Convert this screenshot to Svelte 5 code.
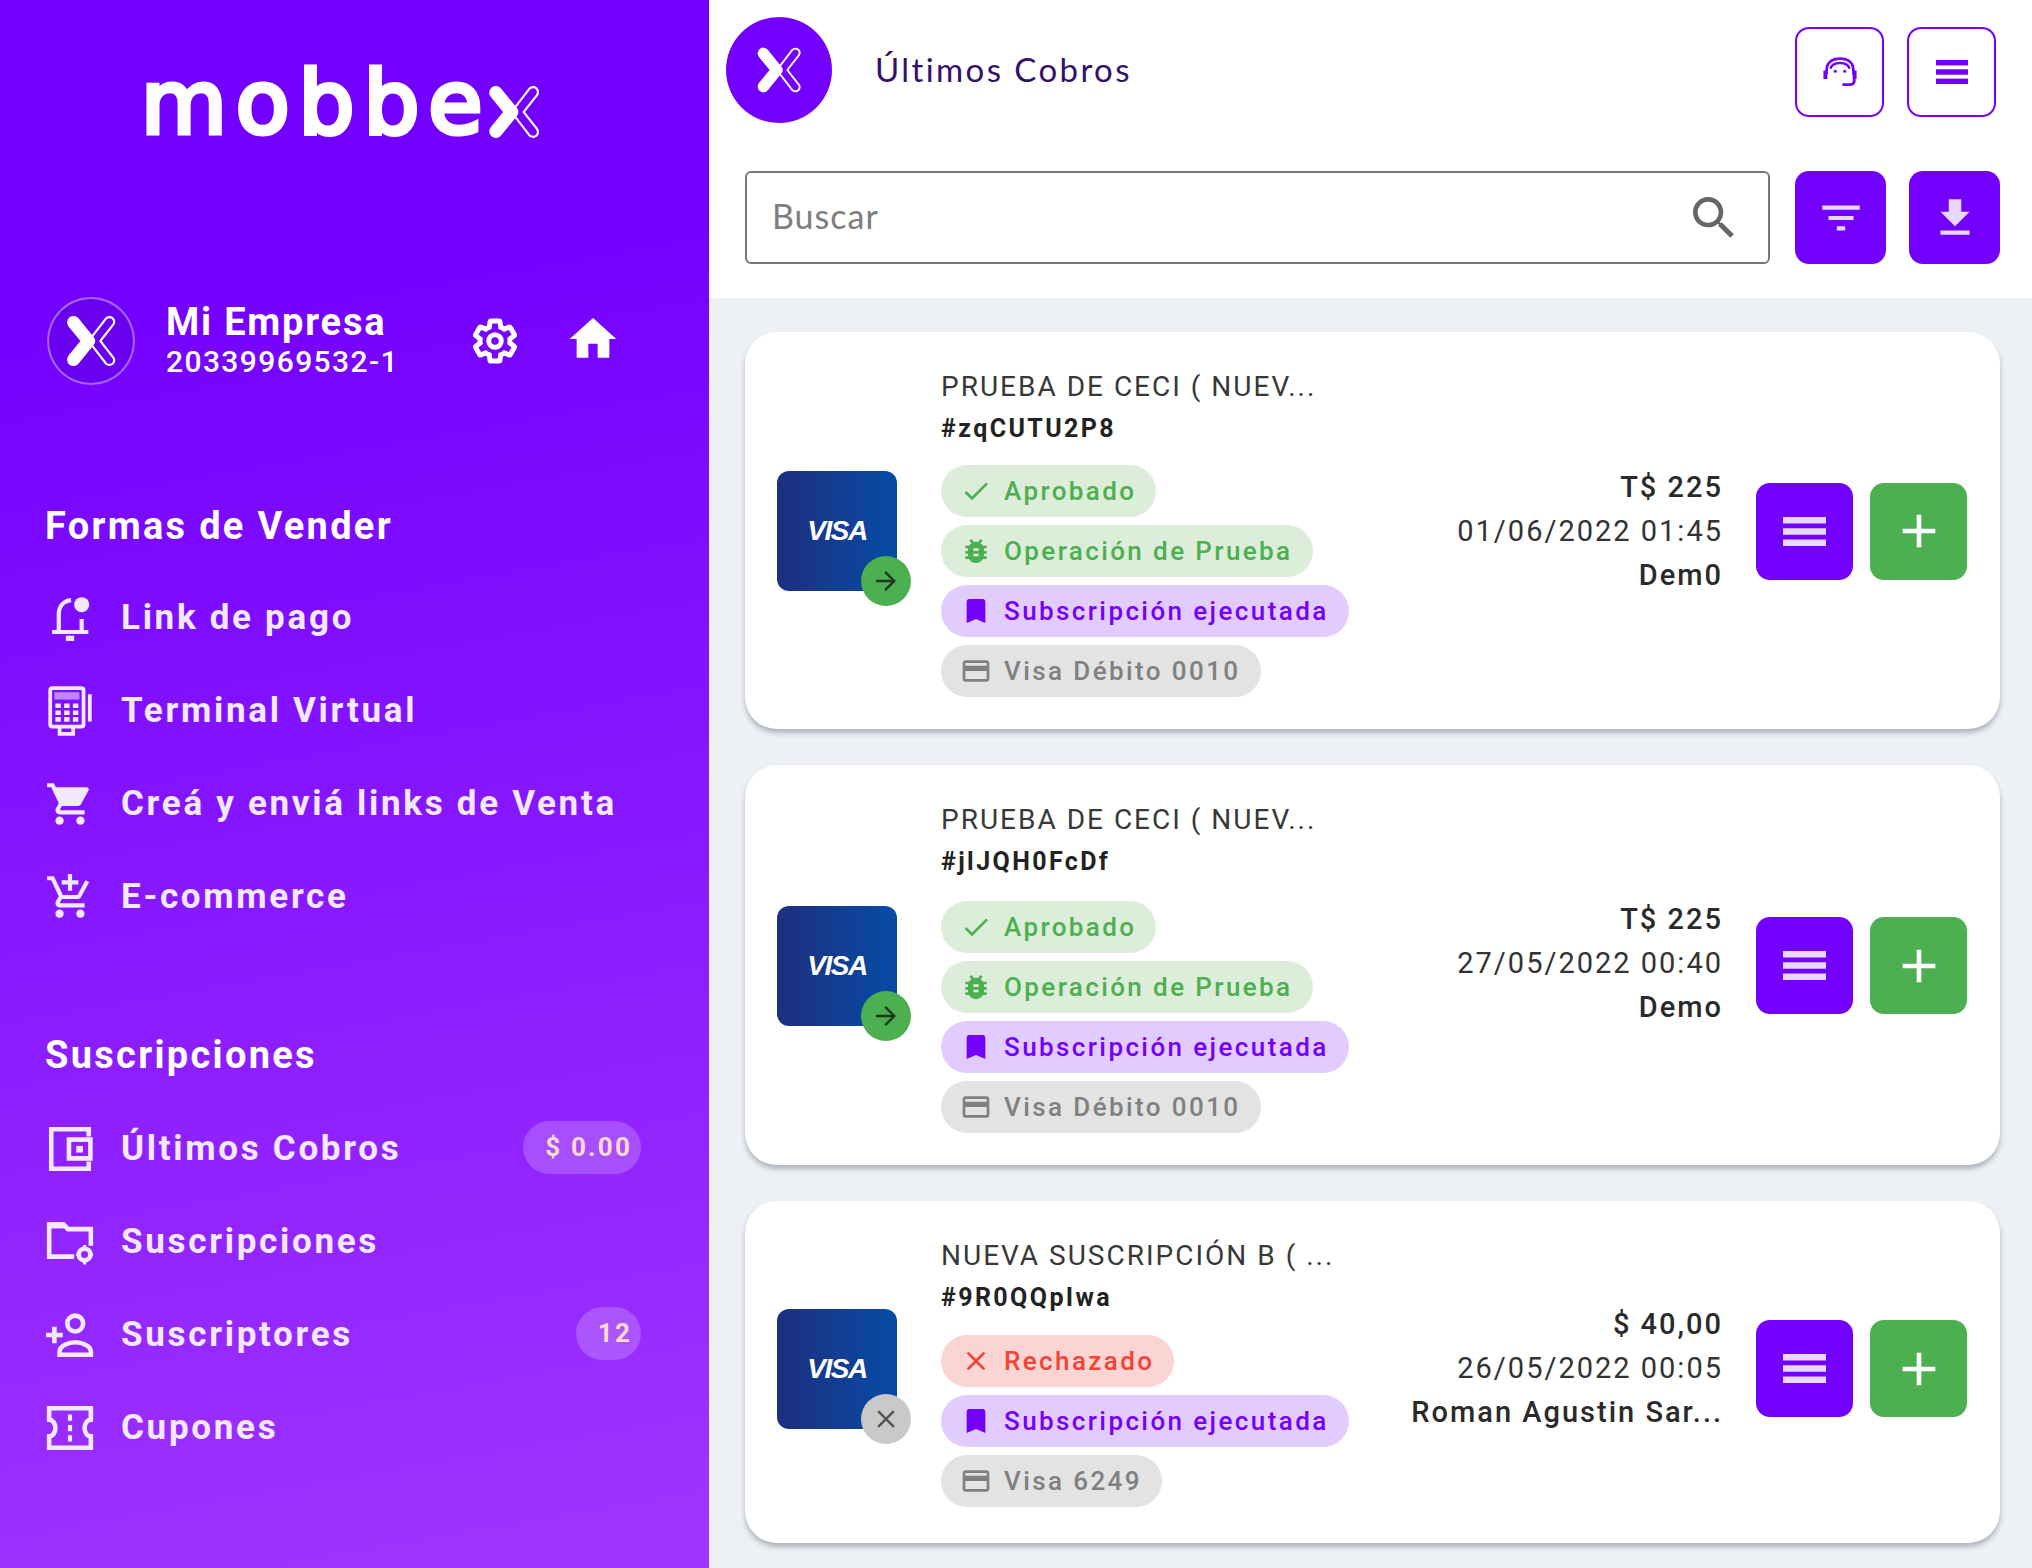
<script lang="ts">
  const icons: Record<string, string> = {
    home: 'M10 20v-6h4v6h5v-8h3L12 3 2 12h3v8z',
    cart: 'M7 18c-1.1 0-1.99.9-1.99 2S5.9 22 7 22s2-.9 2-2-.9-2-2-2zM1 2v2h2l3.6 7.59-1.35 2.45c-.16.28-.25.61-.25.96 0 1.1.9 2 2 2h12v-2H7.42c-.14 0-.25-.11-.25-.25l.03-.12.9-1.63h7.45c.75 0 1.41-.41 1.75-1.03l3.58-6.49c.08-.14.12-.31.12-.48 0-.55-.45-1-1-1H5.21l-.94-2H1zm16 16c-1.1 0-1.99.9-1.99 2s.89 2 1.99 2 2-.9 2-2-.9-2-2-2z',
    addCart: 'M11 9h2V6h3V4h-3V1h-2v3H8v2h3v3zm-4 9c-1.1 0-1.99.9-1.99 2S5.9 22 7 22s2-.9 2-2-.9-2-2-2zm10 0c-1.1 0-1.99.9-1.99 2s.89 2 1.99 2 2-.9 2-2-.9-2-2-2zm-9.83-3.25l.03-.12.9-1.63h7.45c.75 0 1.41-.41 1.75-1.03l3.86-7.01L19.42 4h-.01l-1.1 2-2.76 5H8.53l-.13-.27L6.16 6l-.95-2-.94-2H1v2h2l3.6 7.59-1.35 2.45c-.16.28-.25.61-.25.96 0 1.1.9 2 2 2h12v-2H7.42c-.13 0-.25-.11-.25-.25z',
    filter: 'M10 18h4v-2h-4v2zM3 6v2h18V6H3zm3 7h12v-2H6v2z',
    download: 'M19 9h-4V3H9v6H5l7 7 7-7zM5 18v2h14v-2H5z',
    search: 'M15.5 14h-.79l-.28-.27C15.41 12.59 16 11.11 16 9.5 16 5.91 13.09 3 9.5 3S3 5.91 3 9.5 5.91 16 9.5 16c1.61 0 3.09-.59 4.23-1.57l.27.28v.79l5 4.99L20.49 19l-4.99-5zm-6 0C7.01 14 5 11.99 5 9.5S7.01 5 9.5 5 14 7.01 14 9.5 11.99 14 9.5 14z',
    check: 'M9 16.17L4.83 12l-1.42 1.41L9 19 21 7l-1.41-1.41z',
    bug: 'M20 8h-2.81c-.45-.78-1.07-1.45-1.82-1.96L17 4.41 15.59 3l-2.17 2.17C12.96 5.06 12.49 5 12 5c-.49 0-.96.06-1.41.17L8.41 3 7 4.41l1.62 1.63C7.88 6.55 7.26 7.22 6.81 8H4v2h2.09c-.05.33-.09.66-.09 1v1H4v2h2v1c0 .34.04.67.09 1H4v2h2.81c1.04 1.79 2.97 3 5.19 3s4.15-1.21 5.19-3H20v-2h-2.09c.05-.33.09-.66.09-1v-1h2v-2h-2v-1c0-.34-.04-.67-.09-1H20V8zm-6 8h-4v-2h4v2zm0-4h-4v-2h4v2z',
    bookmark: 'M17 3H7c-1.1 0-2 .9-2 2v16l7-3 7 3V5c0-1.1-.9-2-2-2z',
    card: 'M20 4H4c-1.11 0-1.99.89-1.99 2L2 18c0 1.11.89 2 2 2h16c1.11 0 2-.89 2-2V6c0-1.11-.89-2-2-2zm0 14H4v-6h16v6zm0-10H4V6h16v2z',
    close: 'M19 6.41L17.59 5 12 10.59 6.41 5 5 6.41 10.59 12 5 17.59 6.41 19 12 13.41 17.59 19 19 17.59 13.41 12z',
    arrow: 'M12 4l-1.41 1.41L16.17 11H4v2h12.17l-5.58 5.59L12 20l8-8z',
    plus: 'M19 13h-6v6h-2v-6H5v-2h6V5h2v6h6v2z'
  };

  const sales = [
    { label: 'Link de pago', icon: 'bell' },
    { label: 'Terminal Virtual', icon: 'terminal' },
    { label: 'Creá y enviá links de Venta', icon: 'cart' },
    { label: 'E-commerce', icon: 'addCart' }
  ];

  const subs = [
    { label: 'Últimos Cobros', icon: 'wallet', pill: '$ 0.00' },
    { label: 'Suscripciones', icon: 'folder' },
    { label: 'Suscriptores', icon: 'person', pill: '12' },
    { label: 'Cupones', icon: 'ticket' }
  ];

  const payments = [
    {
      title: 'PRUEBA DE CECI ( NUEV...',
      id: '#zqCUTU2P8',
      amount: 'T$ 225',
      date: '01/06/2022 01:45',
      name: 'Dem0',
      ok: true,
      chips: [
        { text: 'Aprobado', icon: 'check', tone: 'green' },
        { text: 'Operación de Prueba', icon: 'bug', tone: 'green' },
        { text: 'Subscripción ejecutada', icon: 'bookmark', tone: 'purple' },
        { text: 'Visa Débito 0010', icon: 'card', tone: 'grey' }
      ]
    },
    {
      title: 'PRUEBA DE CECI ( NUEV...',
      id: '#jlJQH0FcDf',
      amount: 'T$ 225',
      date: '27/05/2022 00:40',
      name: 'Demo',
      ok: true,
      chips: [
        { text: 'Aprobado', icon: 'check', tone: 'green' },
        { text: 'Operación de Prueba', icon: 'bug', tone: 'green' },
        { text: 'Subscripción ejecutada', icon: 'bookmark', tone: 'purple' },
        { text: 'Visa Débito 0010', icon: 'card', tone: 'grey' }
      ]
    },
    {
      title: 'NUEVA SUSCRIPCIÓN B ( ...',
      id: '#9R0QQpIwa',
      amount: '$ 40,00',
      date: '26/05/2022 00:05',
      name: 'Roman Agustin Sar...',
      ok: false,
      chips: [
        { text: 'Rechazado', icon: 'close', tone: 'red' },
        { text: 'Subscripción ejecutada', icon: 'bookmark', tone: 'purple' },
        { text: 'Visa 6249', icon: 'card', tone: 'grey' }
      ]
    }
  ];
</script>

{#snippet icon(name: string, cls: string)}
  <svg class={cls} viewBox="0 0 24 24" fill="currentColor"><path d={icons[name]} /></svg>
{/snippet}

{#snippet xmark(cls: string)}
  <svg class={cls} viewBox="0 0 48 48" fill="none" stroke="currentColor" stroke-linecap="round" stroke-linejoin="round">
    <path d="M9 8 L22 24 L9 40" stroke-width="11" />
    <path d="M25 20 L37 4.5 Q40 2.5 42.5 4.5 Q45 7 43 10 L32 24 L43 38 Q45 41 42.5 43.5 Q40 45.5 37 43.5 L25 28" stroke-width="1.8" />
  </svg>
{/snippet}

{#snippet bars(cls: string)}
  <svg class={cls} viewBox="0 0 43 29" preserveAspectRatio="none" fill="currentColor">
    <rect width="43" height="6.5" />
    <rect y="11.25" width="43" height="6.5" />
    <rect y="22.5" width="43" height="6.5" />
  </svg>
{/snippet}

{#snippet navIcon(name: string)}
  {#if name === 'bell'}
    <svg class="nav-icon" viewBox="0 0 24 24" fill="none" stroke="currentColor" stroke-width="2">
      <path d="M12.5 3.4C8.6 3.8 6.6 6.8 6.6 10.5v7.2M17.6 12.5v5.2M3.4 18.7h17.4" />
      <path d="M10 20.5h4v2.5h-4z" fill="currentColor" stroke="none" />
      <circle cx="17.6" cy="5.6" r="3.6" fill="currentColor" stroke="none" />
    </svg>
  {:else if name === 'terminal'}
    <svg class="nav-icon" viewBox="0 0 24 24" fill="none" stroke="currentColor" stroke-width="1.8">
      <rect x="2.5" y="1" width="16" height="18.5" rx="1" />
      <path d="M7 19.5v3.5h6.5v-3.5M21.5 4v13" />
      <rect x="4.5" y="3" width="12" height="3.5" fill="currentColor" stroke="none" opacity=".55" />
      <path d="M5 9.5h2.6M9.2 9.5h2.6M13.4 9.5h2.6M5 12.8h2.6M9.2 12.8h2.6M13.4 12.8h2.6M5 16h2.6M9.2 16h2.6M13.4 16h2.6" stroke-width="2.2" />
    </svg>
  {:else if name === 'cart' || name === 'addCart'}
    {@render icon(name, 'nav-icon')}
  {:else if name === 'wallet'}
    <svg class="nav-icon" viewBox="0 0 24 24" fill="none" stroke="currentColor" stroke-width="2.2">
      <path d="M21 6V2.5H3v19h18V18" />
      <path d="M21.8 7.5H11.5v9h10.3z" />
      <rect x="15" y="10.5" width="3.2" height="3.2" fill="currentColor" stroke="none" />
    </svg>
  {:else if name === 'folder'}
    <svg class="nav-icon" viewBox="0 0 24 24" fill="none" stroke="currentColor" stroke-width="2.2">
      <path d="M14 19H2V3.6h7l2 2.2h11v8" />
      <path d="M2 2.5h7v3H2z" fill="currentColor" stroke="none" />
      <circle cx="19" cy="18" r="2.8" />
      <path d="M19 13.4v1.4M19 21.2v1.6M15 18h.8M22.2 18h.8" stroke-width="1.6" />
    </svg>
  {:else if name === 'person'}
    <svg class="nav-icon" viewBox="0 0 24 24" fill="none" stroke="currentColor" stroke-width="2.2">
      <circle cx="14.5" cy="6.5" r="3.8" />
      <path d="M7 21.5v-1.5c0-2.8 4.4-4.5 7.5-4.5s7.5 1.7 7.5 4.5v1.5z" />
      <path d="M0.5 12h8M4.5 8v8" />
    </svg>
  {:else}
    <svg class="nav-icon" viewBox="0 0 24 24" fill="none" stroke="currentColor" stroke-width="2.2">
      <path d="M22 8V2.5H2V8c1.7 0 3 1.8 3 4s-1.3 4-3 4v5.5h20V16c-1.7 0-3-1.8-3-4s1.3-4 3-4z" />
      <path d="M12 5.5v3M12 10.5v3M12 15.5v3" stroke-width="2" />
    </svg>
  {/if}
{/snippet}

<div class="page">
  <aside class="sidebar">
    <div class="logo">
      <span class="wordmark">mobbe</span>{@render xmark('logo-x')}
    </div>

    <div class="user">
      <div class="avatar">{@render xmark('avatar-x')}</div>
      <div class="user-info">
        <span class="company">Mi Empresa</span>
        <span class="tax-id">20339969532-1</span>
      </div>
      <svg class="gear" viewBox="0 0 24 24" fill="none" stroke="currentColor" stroke-width="2.4">
        <path d="M19.14 12.94c.04-.3.06-.61.06-.94 0-.32-.02-.64-.07-.94l2.03-1.58c.18-.14.23-.41.12-.61l-1.92-3.32c-.12-.22-.37-.29-.59-.22l-2.39.96c-.5-.38-1.03-.7-1.62-.94l-.36-2.54c-.04-.24-.24-.41-.48-.41h-3.84c-.24 0-.43.17-.47.41l-.36 2.54c-.59.24-1.13.57-1.62.94l-2.39-.96c-.22-.08-.47 0-.59.22L2.74 8.87c-.12.21-.08.47.12.61l2.03 1.58c-.05.3-.09.63-.09.94s.02.64.07.94l-2.03 1.58c-.18.14-.23.41-.12.61l1.92 3.32c.12.22.37.29.59.22l2.39-.96c.5.38 1.03.7 1.62.94l.36 2.54c.05.24.24.41.48.41h3.84c.24 0 .44-.17.47-.41l.36-2.54c.59-.24 1.13-.56 1.62-.94l2.39.96c.22.08.47 0 .59-.22l1.92-3.32c.12-.22.07-.47-.12-.61l-2.01-1.58z" />
        <circle cx="12" cy="12" r="3" />
      </svg>
      {@render icon('home', 'home')}
    </div>

    <h2 class="section first">Formas de Vender</h2>
    {#each sales as item}
      <div class="nav-item">
        {@render navIcon(item.icon)}
        <span class="nav-label">{item.label}</span>
      </div>
    {/each}

    <h2 class="section second">Suscripciones</h2>
    {#each subs as item}
      <div class="nav-item">
        {@render navIcon(item.icon)}
        <span class="nav-label">{item.label}</span>
        {#if item.pill}
          <span class="pill">{item.pill}</span>
        {/if}
      </div>
    {/each}
  </aside>

  <main class="main">
    <section class="top">
      <header class="header">
        <div class="brand-circle">{@render xmark('brand-x')}</div>
        <h1>Últimos Cobros</h1>
        <button class="outline">
          <svg class="headset" viewBox="0 0 24 19" fill="none" stroke="currentColor" stroke-width="1.7">
            <path d="M3.5 11V8.5C3.5 3.5 7 1 12 1s8.5 2.5 8.5 7.5V11" />
            <path d="M6 7.5C6.5 5 9 3.8 12 3.8s5.5 1.2 6 3.7" stroke-width="1.5" />
            <path d="M1.5 8.5h2.5v5.5H1.500zM20 8.500h2.500v5.500H20z" fill="currentColor" stroke="none" />
            <path d="M21 14v1c0 2-1 2.500-3 2.500h-4.500" stroke-width="1.8" />
            <circle cx="9" cy="9" r="1" fill="currentColor" stroke="none" />
            <circle cx="15" cy="9" r="1" fill="currentColor" stroke="none" />
          </svg>
        </button>
        <button class="outline second-btn">{@render bars('head-bars')}</button>
      </header>
      <div class="search-row">
        <div class="search">
          <span class="placeholder">Buscar</span>
          {@render icon('search', 'search-icon')}
        </div>
        <button class="solid filter">{@render icon('filter', 'solid-icon')}</button>
        <button class="solid dl">{@render icon('download', 'solid-icon')}</button>
      </div>
    </section>

    <section class="list">
      {#each payments as p}
        <article class="pay-card">
          <div class="visa">
            <span>VISA</span>
            <div class="badge" class:bad={!p.ok}>{@render icon(p.ok ? 'arrow' : 'close', 'badge-icon')}</div>
          </div>
          <div class="details">
            <div class="title">{p.title}</div>
            <div class="ref">{p.id}</div>
            <div class="chips">
              {#each p.chips as chip}
                <div class="chip {chip.tone}">
                  {@render icon(chip.icon, 'chip-icon')}
                  <span>{chip.text}</span>
                </div>
              {/each}
            </div>
          </div>
          <div class="amounts">
            <div class="amount">{p.amount}</div>
            <div class="date">{p.date}</div>
            <div class="name">{p.name}</div>
          </div>
          <button class="act purple">{@render bars('act-bars')}</button>
          <button class="act green-btn">{@render icon('plus', 'act-icon')}</button>
        </article>
      {/each}
    </section>
  </main>
</div>

<style>
  :global(body) {
    margin: 0;
    background: #edf1f5;
    font-family: Roboto, "Liberation Sans", sans-serif;
  }
  .page {
    display: flex;
    width: 2032px;
    height: 1568px;
    overflow: hidden;
  }

  /* sidebar */
  .sidebar {
    width: 709px;
    flex-shrink: 0;
    box-sizing: border-box;
    padding: 0 68px 0 47px;
    color: #fff;
    background: linear-gradient(170deg, #7300ff 18%, #a035ff 100%);
  }
  .logo {
    height: 206px;
    display: flex;
    align-items: center;
    padding-left: 94px;
  }
  .wordmark {
    font-family: "DejaVu Sans", sans-serif;
    font-size: 88px;
    line-height: 1;
    letter-spacing: 9px;
    -webkit-text-stroke: 5px #fff;
    margin-top: 0;
  }
  .logo :global(.logo-x) {
    width: 58px;
    height: 58px;
    margin: 18px 0 0 -6px;
  }
  .user {
    margin-top: 91px;
    height: 88px;
    display: flex;
    align-items: center;
  }
  .avatar {
    width: 88px;
    height: 88px;
    box-sizing: border-box;
    border-radius: 50%;
    border: 2px solid rgba(255, 255, 255, 0.4);
    background: #6a00f0;
    display: flex;
    align-items: center;
    justify-content: center;
    flex-shrink: 0;
  }
  .avatar :global(.avatar-x) {
    width: 56px;
    height: 56px;
  }
  .user-info {
    margin-left: 31px;
    display: flex;
    flex-direction: column;
    width: 306px;
  }
  .company {
    font-size: 38px;
    font-weight: 700;
    line-height: 42px;
    letter-spacing: 1.8px;
  }
  .tax-id {
    font-size: 30px;
    font-weight: 500;
    line-height: 38px;
    letter-spacing: 1.4px;
  }
  .gear {
    width: 50px;
    height: 50px;
    margin-left: -2px;
  }
  .user :global(.home) {
    width: 56px;
    height: 56px;
    margin-left: 45px;
    margin-top: -4px;
  }
  .section {
    margin: 0 0 24px -2px;
    height: 48px;
    font-size: 38px;
    line-height: 48px;
    font-weight: 700;
    letter-spacing: 2.3px;
  }
  .section.first {
    margin-top: 117px;
    margin-bottom: 22px;
  }
  .section.second {
    margin-top: 87px;
  }
  .nav-item {
    height: 93px;
    display: flex;
    align-items: center;
    font-size: 35px;
    font-weight: 700;
    letter-spacing: 2.7px;
    color: #f3e9ff;
  }
  .nav-label {
    margin-top: -3px;
  }
  .nav-item :global(.nav-icon) {
    width: 50px;
    height: 50px;
    margin: -2px 26px 0 -2px;
    flex-shrink: 0;
  }
  .pill {
    margin: 0 0 5px auto;
    height: 53px;
    min-width: 61px;
    box-sizing: border-box;
    padding: 0 9px 0 22px;
    border-radius: 27px;
    background: rgba(255, 255, 255, 0.2);
    color: #ffd9c9;
    font-size: 26px;
    letter-spacing: 2.2px;
    display: flex;
    justify-content: flex-end;
    align-items: center;
  }

  /* top area */
  .main {
    flex: 1;
    min-width: 0;
  }
  .top {
    background: #fff;
    height: 298px;
  }
  .header {
    height: 154px;
    box-sizing: border-box;
    padding: 17px 36px 0 17px;
    display: flex;
    align-items: flex-start;
  }
  .brand-circle {
    width: 106px;
    height: 106px;
    border-radius: 50%;
    background: #7300ff;
    color: #fff;
    display: flex;
    align-items: center;
    justify-content: center;
  }
  .brand-circle :global(.brand-x) {
    width: 50px;
    height: 50px;
  }
  h1 {
    margin: 0 0 0 43px;
    font-family: Lato, sans-serif;
    font-size: 33px;
    font-weight: 400;
    line-height: 104px;
    letter-spacing: 2.4px;
    color: #35106b;
    flex: 1;
  }
  button {
    padding: 0;
    display: flex;
    align-items: center;
    justify-content: center;
    cursor: pointer;
  }
  .outline {
    width: 89px;
    height: 90px;
    margin-top: 10px;
    box-sizing: border-box;
    background: #fff;
    border: 2px solid #7300ff;
    border-radius: 14px;
    color: #7300ff;
  }
  .second-btn {
    margin-left: 23px;
  }
  .outline :global(.head-bars) {
    width: 32px;
    height: 24px;
  }
  .headset {
    width: 38px;
    height: 30px;
  }
  .search-row {
    display: flex;
    padding: 17px 32px 0 36px;
  }
  .search {
    flex: 1;
    height: 93px;
    box-sizing: border-box;
    border: 2px solid #777;
    border-radius: 6px;
    padding: 0 26px 0 25px;
    display: flex;
    align-items: center;
    justify-content: space-between;
    font-family: Lato, sans-serif;
    font-size: 34px;
    letter-spacing: 1px;
    color: #7d7d7d;
  }
  .placeholder {
    margin-top: -4px;
  }
  .search :global(.search-icon) {
    width: 56px;
    height: 56px;
    color: #666;
  }
  .solid {
    width: 91px;
    height: 93px;
    border: none;
    border-radius: 14px;
    background: #7300ff;
    color: #e8d8ff;
  }
  .filter {
    margin-left: 25px;
  }
  .dl {
    margin-left: 23px;
  }
  .solid :global(.solid-icon) {
    width: 50px;
    height: 50px;
  }

  /* payments */
  .list {
    padding: 34px 32px 0 36px;
    display: flex;
    flex-direction: column;
    gap: 36px;
  }
  .pay-card {
    display: flex;
    align-items: center;
    background: #fff;
    border-radius: 32px;
    box-shadow: 0 4px 5px rgba(60, 70, 90, 0.35);
    padding: 33px 33px 32px 32px;
  }
  .pay-card:not(:first-child) .chips {
    margin-top: 19px;
  }
  .pay-card:not(:first-child) .amounts {
    margin-bottom: 5px;
  }
  .pay-card:last-child {
    padding-bottom: 36px;
  }
  .pay-card:last-child .chips {
    margin-top: 17px;
  }
  .pay-card:last-child .visa,
  .pay-card:last-child .act {
    margin-bottom: 4px;
  }
  .visa {
    position: relative;
    width: 120px;
    height: 120px;
    flex-shrink: 0;
    border-radius: 12px;
    background: linear-gradient(90deg, #1e2f7e, #064ca6);
    display: flex;
    align-items: center;
    justify-content: center;
    color: #fff;
    font-family: "Liberation Sans", sans-serif;
    font-size: 28px;
    font-weight: 700;
    font-style: italic;
    letter-spacing: -1.5px;
  }
  .badge {
    position: absolute;
    right: -14px;
    bottom: -15px;
    width: 50px;
    height: 50px;
    border-radius: 50%;
    background: #4caf50;
    color: #1d3a1f;
    display: flex;
    align-items: center;
    justify-content: center;
  }
  .badge.bad {
    background: #c9c9c9;
    color: #555;
  }
  .badge :global(.badge-icon) {
    width: 30px;
    height: 30px;
  }
  .details {
    margin-left: 44px;
  }
  .title {
    font-size: 28px;
    line-height: 44px;
    letter-spacing: 2px;
    color: #383838;
  }
  .ref {
    font-size: 25px;
    line-height: 40px;
    font-weight: 700;
    letter-spacing: 2.4px;
    color: #222;
  }
  .chips {
    margin-top: 16px;
    display: flex;
    flex-direction: column;
    align-items: flex-start;
    gap: 8px;
  }
  .chip {
    height: 52px;
    border-radius: 26px;
    box-sizing: border-box;
    padding: 0 20px 0 19px;
    display: flex;
    align-items: center;
    font-size: 26px;
    font-weight: 500;
    letter-spacing: 2.4px;
    white-space: nowrap;
  }
  .chip :global(.chip-icon) {
    width: 32px;
    height: 32px;
    margin-right: 12px;
    flex-shrink: 0;
  }
  .chip.green {
    background: #dcedda;
    color: #4caf50;
  }
  .chip.purple {
    background: #e2ccff;
    color: #7300ff;
  }
  .chip.grey {
    background: #e3e3e3;
    color: #808080;
  }
  .chip.red {
    background: #fbd5d3;
    color: #f44336;
  }
  .amounts {
    margin-left: auto;
    margin-right: 33px;
    text-align: right;
    font-size: 29px;
    line-height: 44px;
    color: #333;
    letter-spacing: 2px;
  }
  .amount,
  .name {
    font-weight: 500;
    color: #2a2a2a;
  }
  .act {
    width: 97px;
    height: 97px;
    border: none;
    border-radius: 14px;
    color: #fff;
  }
  .act.purple {
    background: #7300ff;
    color: #e8d8ff;
  }
  .act.green-btn {
    background: #4caf50;
    margin-left: 17px;
  }
  .act :global(.act-bars) {
    width: 43px;
    height: 29px;
  }
  .act :global(.act-icon) {
    width: 56px;
    height: 56px;
  }
</style>
